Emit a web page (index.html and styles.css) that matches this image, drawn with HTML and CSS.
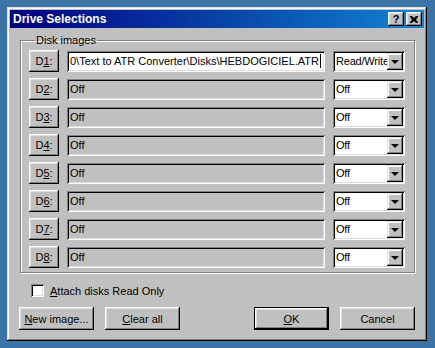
FILE: index.html
```html
<!DOCTYPE html>
<html lang="en">
<head>
  <meta charset="UTF-8" />
  <title>Drive Selections</title>
  <link rel="stylesheet" href="styles.css">
</head>
<body>
  <div class="window">
    <div class="titlebar">
      <span class="title">Drive Selections</span>
      <div class="title-buttons">
        <span class="tbtn">?</span>
        <span class="tbtn tbtn-close">
          <svg width="8" height="7" viewBox="0 0 8 7"><path d="M0 0h2l2 2 2-2h2v1l-2 2.5 2 2.5v1h-2l-2-2-2 2h-2v-1l2-2.5-2-2.5z" fill="#000"/></svg>
        </span>
      </div>
    </div>

    <div class="content">
      <fieldset class="group">
        <legend>Disk images</legend>

        <div class="row">
          <span class="btn drive">D<u>1</u>:</span>
          <div class="field field-on"><span class="path">0\Text to ATR Converter\Disks\HEBDOGICIEL.ATR</span><span class="caret"></span></div>
          <div class="combo"><span class="combo-text">Read/Write</span><span class="combo-arrow"></span></div>
        </div>
        <div class="row">
          <span class="btn drive">D<u>2</u>:</span>
          <div class="field">Off</div>
          <div class="combo"><span class="combo-text">Off</span><span class="combo-arrow"></span></div>
        </div>
        <div class="row">
          <span class="btn drive">D<u>3</u>:</span>
          <div class="field">Off</div>
          <div class="combo"><span class="combo-text">Off</span><span class="combo-arrow"></span></div>
        </div>
        <div class="row">
          <span class="btn drive">D<u>4</u>:</span>
          <div class="field">Off</div>
          <div class="combo"><span class="combo-text">Off</span><span class="combo-arrow"></span></div>
        </div>
        <div class="row">
          <span class="btn drive">D<u>5</u>:</span>
          <div class="field">Off</div>
          <div class="combo"><span class="combo-text">Off</span><span class="combo-arrow"></span></div>
        </div>
        <div class="row">
          <span class="btn drive">D<u>6</u>:</span>
          <div class="field">Off</div>
          <div class="combo"><span class="combo-text">Off</span><span class="combo-arrow"></span></div>
        </div>
        <div class="row">
          <span class="btn drive">D<u>7</u>:</span>
          <div class="field">Off</div>
          <div class="combo"><span class="combo-text">Off</span><span class="combo-arrow"></span></div>
        </div>
        <div class="row">
          <span class="btn drive">D<u>8</u>:</span>
          <div class="field">Off</div>
          <div class="combo"><span class="combo-text">Off</span><span class="combo-arrow"></span></div>
        </div>
      </fieldset>

      <label class="check">
        <span class="checkbox"></span>
        <span><u>A</u>ttach disks Read Only</span>
      </label>

      <div class="actions">
        <span class="btn wide"><u>N</u>ew image...</span>
        <span class="btn wide"><u>C</u>lear all</span>
        <span class="spacer"></span>
        <span class="btn wide default"><u>O</u>K</span>
        <span class="btn wide">Cancel</span>
      </div>
    </div>
  </div>
</body>
</html>
```

FILE: styles.css
```css
* {
  margin: 0;
  padding: 0;
  box-sizing: border-box;
}

body {
  background: #3d74a8;
  font-family: "Liberation Sans", Arial, sans-serif;
  font-size: 11px;
  color: #000;
  padding: 7px;
}

u {
  text-decoration: underline;
  text-underline-offset: 1px;
}

.window {
  width: 420px;
  height: 334px;
  padding: 3px;
  background: #c0c0c0;
  box-shadow: inset -1px -1px #000, inset 1px 1px #dfdfdf,
              inset -2px -2px #808080, inset 2px 2px #fff;
  display: flex;
  flex-direction: column;
}

.titlebar {
  height: 18px;
  display: flex;
  align-items: center;
  justify-content: space-between;
  padding: 0 2px 0 3px;
  background: linear-gradient(90deg, #000080, #1084d0);
  color: #fff;
  font-weight: bold;
  font-size: 12px;
}

.title-buttons {
  display: flex;
  gap: 2px;
}

.tbtn {
  width: 16px;
  height: 14px;
  display: flex;
  align-items: center;
  justify-content: center;
  background: #c0c0c0;
  color: #000;
  font-size: 11px;
  font-weight: bold;
  box-shadow: inset -1px -1px #000, inset 1px 1px #fff,
              inset -2px -2px #808080, inset 2px 2px #dfdfdf;
}

.content {
  flex: 1;
  display: flex;
  flex-direction: column;
  padding: 6px 9px 8px 10px;
}

.group {
  border: 1px solid #808080;
  box-shadow: 1px 1px #fff, inset 1px 1px #fff;
  padding: 3px 9px 4px 8px;
  display: flex;
  flex-direction: column;
  gap: 6px;
  min-width: 0;
}

.group legend {
  padding: 0 1px;
  margin-left: 6px;
  line-height: 13px;
}

.row {
  display: flex;
  align-items: center;
  gap: 8px;
  height: 22px;
}

.btn {
  display: flex;
  align-items: center;
  justify-content: center;
  background: #c0c0c0;
  box-shadow: inset -1px -1px #000, inset 1px 1px #fff,
              inset -2px -2px #808080, inset 2px 2px #dfdfdf;
}

.drive {
  width: 30px;
  height: 22px;
  flex: none;
}

.field {
  flex: 1;
  min-width: 0;
  height: 21px;
  padding: 3px 3px;
  line-height: 15px;
  background: #c0c0c0;
  box-shadow: inset 1px 1px #808080, inset -1px -1px #fff,
              inset 2px 2px #000, inset -2px -2px #dfdfdf;
  white-space: nowrap;
  overflow: hidden;
}

.field-on {
  background: #fff;
  display: flex;
  align-items: center;
}

.caret {
  width: 1px;
  height: 14px;
  margin-left: 1px;
  background: #000;
  flex: none;
}

.combo {
  width: 72px;
  height: 21px;
  flex: none;
  display: flex;
  align-items: center;
  padding: 2px;
  background: #fff;
  box-shadow: inset 1px 1px #808080, inset -1px -1px #fff,
              inset 2px 2px #000, inset -2px -2px #dfdfdf;
}

.combo-text {
  flex: 1;
  min-width: 0;
  padding-left: 1px;
  white-space: nowrap;
  overflow: hidden;
  letter-spacing: -0.2px;
}

.combo-arrow {
  width: 16px;
  height: 17px;
  flex: none;
  position: relative;
  background: #c0c0c0;
  box-shadow: inset -1px -1px #000, inset 1px 1px #dfdfdf,
              inset -2px -2px #808080, inset 2px 2px #fff;
}

.combo-arrow::after {
  content: "";
  position: absolute;
  left: 4px;
  top: 7px;
  border-left: 4px solid transparent;
  border-right: 4px solid transparent;
  border-top: 4px solid #000;
}

.check {
  display: flex;
  align-items: center;
  gap: 6px;
  margin: 11px 0 0 11px;
  height: 13px;
}

.checkbox {
  width: 13px;
  height: 13px;
  background: #fff;
  box-shadow: inset 1px 1px #808080, inset -1px -1px #fff,
              inset 2px 2px #000, inset -2px -2px #dfdfdf;
}

.actions {
  display: flex;
  gap: 11px;
  margin-top: auto;
  margin-left: -1px;
}

.wide {
  width: 75px;
  height: 23px;
}

.spacer {
  flex: 1;
}

.default {
  box-shadow: inset 0 0 0 1px #000, inset -2px -2px #000, inset 2px 2px #fff,
              inset -3px -3px #808080, inset 3px 3px #dfdfdf;
}
```
